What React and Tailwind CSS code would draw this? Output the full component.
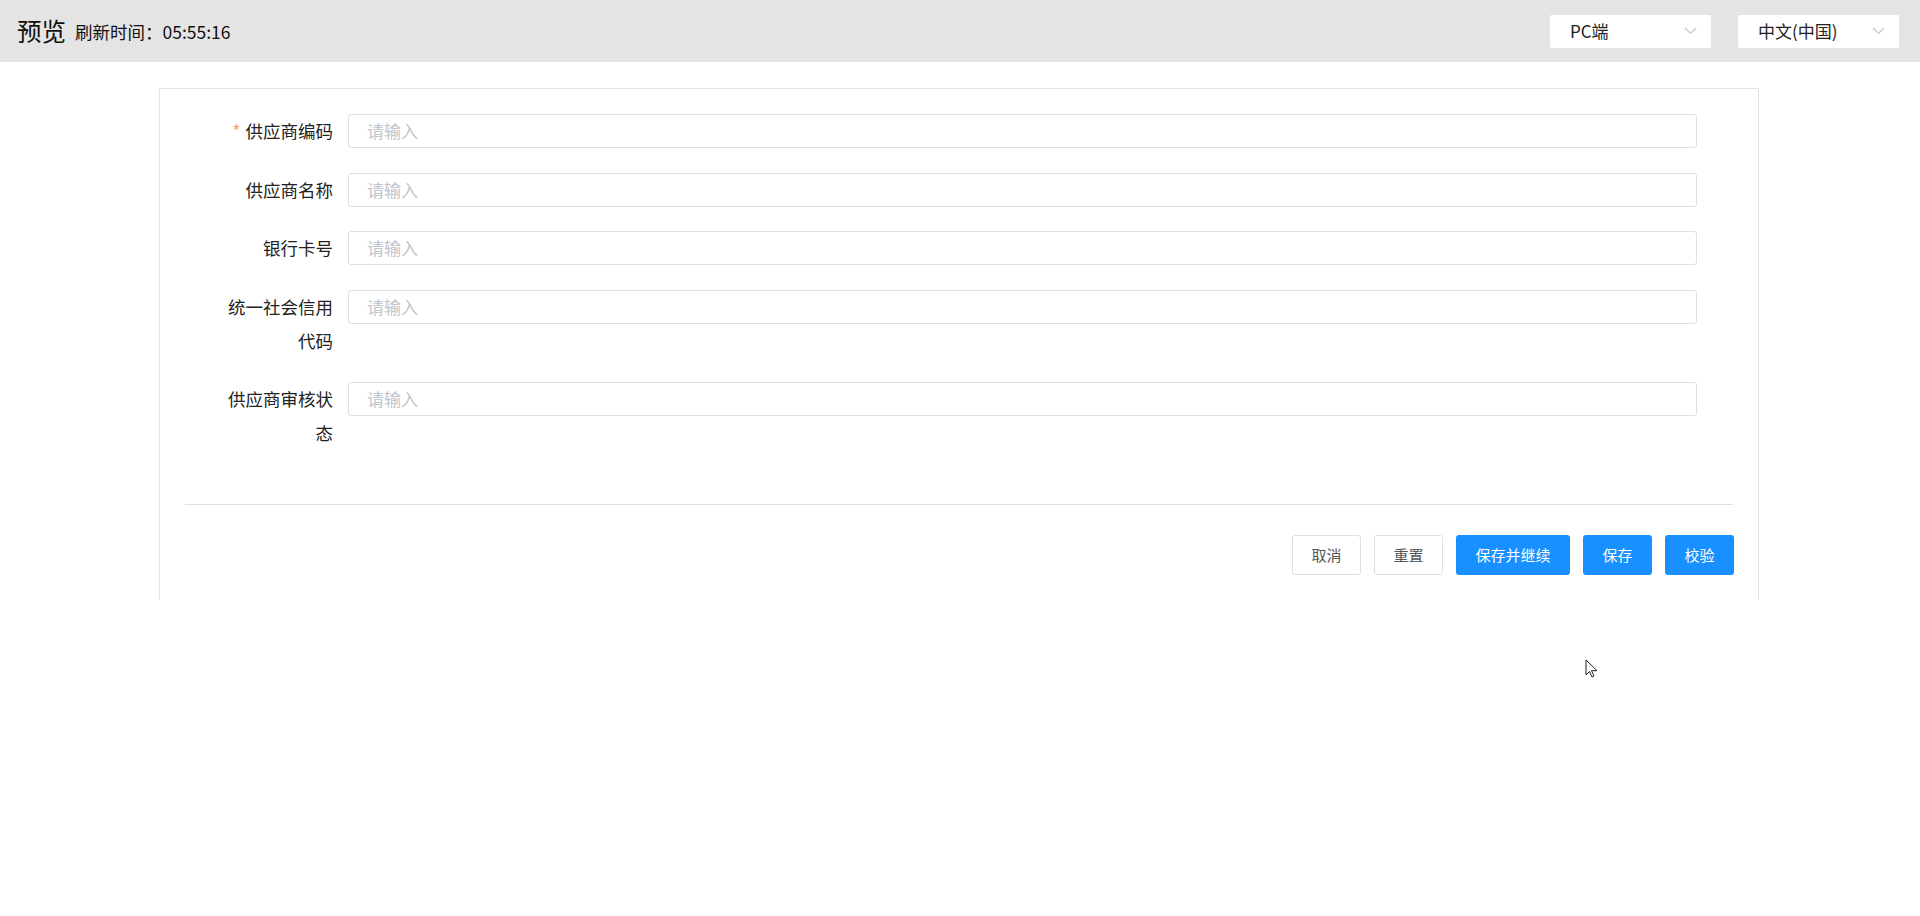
import React from 'react';

const font = { fontFamily: '"Noto Sans CJK SC", "Noto Sans", sans-serif' };

const Chevron = () => (
    <svg width="13" height="8" viewBox="0 0 13 8" fill="none">
        <path d="M1 1l5.5 5.5L12 1" stroke="#c0c4cc" strokeWidth="1.2" />
    </svg>
);

const Select = ({ value }) => (
    <div className="w-[161px] h-[33px] bg-white rounded-[2px] flex items-center justify-between pl-[20px] pr-[14px]">
        <span className="text-[17px] text-[#222]">{value}</span>
        <Chevron />
    </div>
);

const fields = [
    { label: '供应商编码', required: true },
    { label: '供应商名称' },
    { label: '银行卡号' },
    { label: '统一社会信用代码' },
    { label: '供应商审核状态' },
];

const FormRow = ({ label, required }) => (
    <div className="flex items-start mb-[24.5px]">
        <div className="w-[188px] shrink-0 pr-[15px] pl-[61px] text-right text-[17.5px] leading-[34px] text-[#222]">
            {required && <span className="text-[#f0a060] mr-[5px]">*</span>}
            {label}
        </div>
        <div className="flex-1 h-[34px] border border-[#dcdfe6] rounded-[3px] flex items-center pl-[18px] text-[17px] text-[#c0c4cc]">
            请输入
        </div>
    </div>
);

const Button = ({ children, primary, w = 'w-[69px]' }) => (
    <div
        className={`${w} h-[40px] rounded-[3px] flex items-center justify-center text-[15px] ${
            primary ? 'bg-[#1890ff] text-white' : 'bg-white border border-[#dcdfe6] text-[#555]'
        }`}
    >
        {children}
    </div>
);

export default function App() {
    return (
        <div className="w-[1920px] h-[916px] bg-white relative overflow-hidden" style={font}>
            <div className="h-[62px] bg-[#e4e4e4] flex items-center justify-between pl-[17px] pr-[21px]">
                <div className="flex items-center">
                    <span className="text-[24.5px] text-[#111] leading-none">预览</span>
                    <span className="text-[17.5px] text-[#111] ml-[9px] mt-[2px]">刷新时间：05:55:16</span>
                </div>
                <div className="flex items-center gap-[27px]">
                    <Select value="PC端" />
                    <Select value="中文(中国)" />
                </div>
            </div>

            <div className="ml-[159px] mt-[26px] w-[1600px] h-[512px] border-l border-t border-r border-[#e4e4e4]">
                <div className="pt-[25px] pr-[61px]">
                    {fields.map((f) => (
                        <FormRow key={f.label} {...f} />
                    ))}
                </div>
                <div className="mx-[25px] mt-[54px] border-t border-[#e0e0e0]" />
                <div className="flex justify-end gap-[13px] mr-[24px] mt-[30px]">
                    <Button>取消</Button>
                    <Button>重置</Button>
                    <Button primary w="w-[114px]">保存并继续</Button>
                    <Button primary>保存</Button>
                    <Button primary>校验</Button>
                </div>
            </div>

            <svg className="absolute left-[1585px] top-[659px]" width="14" height="20" viewBox="0 0 14 20">
                <path d="M1 1v15l3.5-3.5 2.5 5.5 2-1-2.5-5.3H12z" fill="white" stroke="#222" strokeWidth="1" />
            </svg>
        </div>
    );
}
